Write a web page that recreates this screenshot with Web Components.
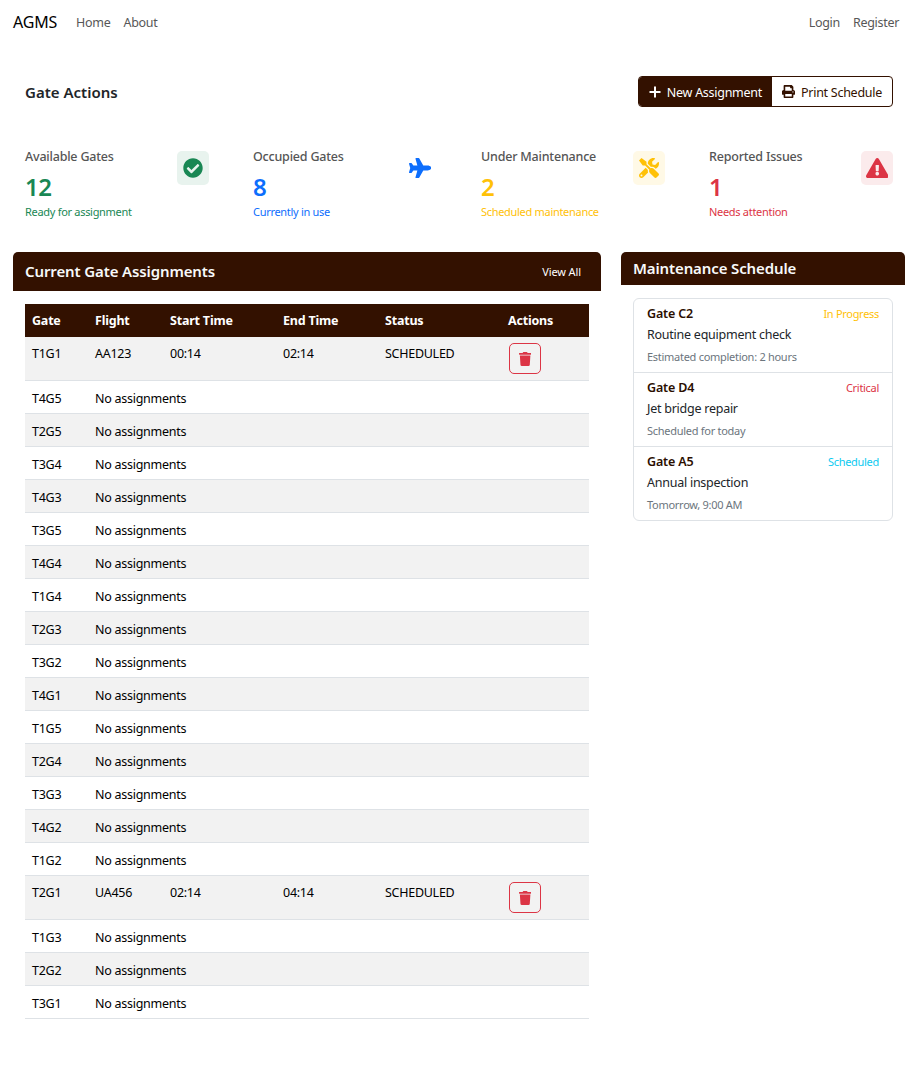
<!DOCTYPE html>
<html lang="en">
<head>
<meta charset="utf-8">
<title>AGMS</title>
<style>
  html, body { margin: 0; background: #fff; }
  body {
    font-family: "Noto Sans", "Open Sans", sans-serif;
    font-size: 13px;
    color: #212529;
    --dark: #331100;
  }
  .wrap { height: 1065px; overflow: hidden; width: 905px; }
</style>
</head>
<body>
<div class="wrap">
  <app-navbar></app-navbar>

  <page-header heading="Gate Actions"></page-header>

  <stat-row>
    <stat-card label="Available Gates" value="12" note="Ready for assignment" tone="#198754" tint="#e8f3ee" icon="check"></stat-card>
    <stat-card label="Occupied Gates" value="8" note="Currently in use" tone="#0d6efd" tint="#ffffff" icon="plane"></stat-card>
    <stat-card label="Under Maintenance" value="2" note="Scheduled maintenance" tone="#ffc107" tint="#fff9e6" icon="tools"></stat-card>
    <stat-card label="Reported Issues" value="1" note="Needs attention" tone="#dc3545" tint="#fbebec" icon="warning"></stat-card>
  </stat-row>

  <main-columns>
    <panel-card slot="left" heading="Current Gate Assignments" tall>
      <span slot="action">View All</span>
      <gate-table></gate-table>
    </panel-card>
    <panel-card slot="right" heading="Maintenance Schedule">
      <maintenance-list>
        <maintenance-item gate="Gate C2" status="In Progress" tone="#ffc107" task="Routine equipment check" when="Estimated completion: 2 hours"></maintenance-item>
        <maintenance-item gate="Gate D4" status="Critical" tone="#dc3545" task="Jet bridge repair" when="Scheduled for today"></maintenance-item>
        <maintenance-item gate="Gate A5" status="Scheduled" tone="#0dcaf0" task="Annual inspection" when="Tomorrow, 9:00 AM"></maintenance-item>
      </maintenance-list>
    </panel-card>
  </main-columns>
</div>

<script>
const ICONS = {
  check: ['0 0 512 512', 'M504 256c0 136.967-111.033 248-248 248S8 392.967 8 256 119.033 8 256 8s248 111.033 248 248zM227.314 387.314l184-184c6.248-6.248 6.248-16.379 0-22.627l-22.627-22.627c-6.248-6.249-16.379-6.249-22.628 0L216 308.118l-70.059-70.059c-6.248-6.248-16.379-6.248-22.628 0l-22.627 22.627c-6.248 6.248-6.248 16.379 0 22.627l104 104c6.249 6.249 16.379 6.249 22.628.001z'],
  plane: ['0 0 576 512', 'M480 192H365.71L260.61 8.06A16.014 16.014 0 0 0 246.71 0h-65.5c-10.63 0-18.3 10.17-15.38 20.39L214.86 192H112l-43.2-57.6c-3.02-4.03-7.77-6.4-12.8-6.4H16.01C5.6 128-2.04 137.78.49 147.88L32 256 .49 364.12C-2.04 374.22 5.6 384 16.01 384H56c5.04 0 9.78-2.37 12.8-6.4L112 320h102.86l-49.03 171.6c-2.92 10.22 4.75 20.4 15.38 20.4h65.5c5.74 0 11.04-3.08 13.89-8.06L365.71 320H480c35.35 0 96-28.65 96-64s-60.65-64-96-64z'],
  tools: ['0 0 512 512', 'M501.1 395.7L384 278.6c-23.1-23.1-57.6-27.6-85.4-13.9L192 158.1V96L64 0 0 64l96 128h62.1l106.6 106.6c-13.6 27.8-9.2 62.3 13.9 85.4l117.1 117.1c14.6 14.6 38.2 14.6 52.7 0l52.7-52.7c14.5-14.6 14.5-38.2 0-52.7zM331.7 225c28.3 0 54.9 11 74.9 31l19.4 19.4c15.8-6.9 30.8-16.5 43.8-29.5 37.1-37.1 49.7-89.3 37.9-136.7-2.2-9-13.5-12.1-20.1-5.5l-74.4 74.4-67.9-11.3L334 98.9l74.4-74.4c6.6-6.6 3.4-17.9-5.7-20.2-47.4-11.7-99.6.9-136.6 37.9-28.5 28.5-41.9 66.1-41.2 103.6l82.1 82.1c8.1-1.9 16.5-2.9 24.7-2.9zm-103.9 82l-56.7-56.7L18.7 402.8c-25 25-25 65.5 0 90.5s65.5 25 90.5 0l123.6-123.6c-7.6-19.9-9.9-41.6-5-62.7zM64 472c-13.2 0-24-10.8-24-24 0-13.3 10.7-24 24-24s24 10.7 24 24c0 13.2-10.7 24-24 24z'],
  warning: ['0 0 576 512', 'M569.517 440.013C587.975 472.007 564.806 512 527.94 512H48.054c-36.937 0-59.999-40.055-41.577-71.987L246.423 23.985c18.467-32.009 64.72-31.951 83.154 0l239.94 416.028zM288 354c-25.405 0-46 20.595-46 46s20.595 46 46 46 46-20.595 46-46-20.595-46-46-46zm-43.673-165.346l7.418 136c.347 6.364 5.609 11.346 11.982 11.346h48.546c6.373 0 11.635-4.982 11.982-11.346l7.418-136c.375-6.874-5.098-12.654-11.982-12.654h-63.383c-6.884 0-12.356 5.78-11.981 12.654z'],
  print: ['0 0 512 512', 'M448 192V77.25c0-8.49-3.37-16.62-9.37-22.63L393.37 9.37c-6-6-14.14-9.37-22.63-9.37H96C78.33 0 64 14.33 64 32v160c-35.35 0-64 28.65-64 64v112c0 8.84 7.16 16 16 16h48v96c0 17.67 14.33 32 32 32h320c17.67 0 32-14.33 32-32v-96h48c8.84 0 16-7.16 16-16V256c0-35.35-28.65-64-64-64zm-64 256H128v-96h256v96zm0-224H128V64h192v48c0 8.84 7.16 16 16 16h48v96zm48 72c-13.25 0-24-10.75-24-24 0-13.26 10.75-24 24-24s24 10.74 24 24c0 13.25-10.75 24-24 24z'],
  trash: ['0 0 448 512', 'M432 32H312l-9.4-18.7A24 24 0 0 0 281.1 0H166.8a23.72 23.72 0 0 0-21.4 13.3L136 32H16A16 16 0 0 0 0 48v32a16 16 0 0 0 16 16h416a16 16 0 0 0 16-16V48a16 16 0 0 0-16-16zM53.2 467a48 48 0 0 0 47.9 45h245.8a48 48 0 0 0 47.9-45L416 128H32z']
};

function icon(name, height) {
  const [box, d] = ICONS[name];
  const w = box.split(' ')[2] / 512 * height;
  return `<svg xmlns="http://www.w3.org/2000/svg" viewBox="${box}" width="${w}" height="${height}" fill="currentColor" style="display:block"><path d="${d}"/></svg>`;
}

class AppNavbar extends HTMLElement {
  connectedCallback() {
    this.attachShadow({ mode: 'open' });
    this.shadowRoot.innerHTML = `
      <style>
        :host { display: flex; align-items: center; height: 44px; margin-bottom: 1px; padding: 0 6px 0 13px; }
        .brand { font-size: 16px; letter-spacing: -0.2px; color: #000; margin-right: 19px; }
        a { color: #575757; font-size: 12.5px; letter-spacing: -0.3px; margin-right: 13px; }
        .push { flex: 1; }
        a:last-child { margin-right: 0; }
      </style>
      <span class="brand">AGMS</span>
      <a>Home</a><a>About</a>
      <span class="push"></span>
      <a>Login</a><a>Register</a>
    `;
  }
}

class PageHeader extends HTMLElement {
  connectedCallback() {
    this.attachShadow({ mode: 'open' });
    this.shadowRoot.innerHTML = `
      <style>
        :host { display: flex; align-items: center; justify-content: space-between; padding: 31px 12px 0 25px; height: 31px; }
        h1 { margin: 0; font-size: 15px; font-weight: 600; color: #212529; }
        .group { display: flex; height: 31px; box-sizing: border-box; border: 1px solid var(--dark); border-radius: 4px; overflow: hidden; font-size: 12.5px; letter-spacing: -0.27px; }
        .btn { display: flex; align-items: center; gap: 6px; padding: 1px 10px 0; }
        .btn svg { margin-top: -1px; }
        .primary { background: var(--dark); color: #fff; }
        .plain { color: var(--dark); }
      </style>
      <h1>${this.getAttribute('heading')}</h1>
      <div class="group">
        <div class="btn primary">
          <svg width="12" height="12" viewBox="0 0 12 12" fill="none" stroke="currentColor" stroke-width="2"><path d="M6 .5v11M.5 6h11"/></svg>
          New Assignment
        </div>
        <div class="btn plain">${icon('print', 13)}Print Schedule</div>
      </div>
    `;
  }
}

class StatRow extends HTMLElement {
  connectedCallback() {
    this.attachShadow({ mode: 'open' });
    this.shadowRoot.innerHTML = `
      <style>
        :host { display: grid; grid-template-columns: repeat(4, 184px); justify-content: space-between; padding: 41px 12px 0 25px; width: 868px; }
      </style>
      <slot></slot>
    `;
  }
}

class StatCard extends HTMLElement {
  connectedCallback() {
    const tone = this.getAttribute('tone');
    const name = this.getAttribute('icon');
    this.attachShadow({ mode: 'open' });
    this.shadowRoot.innerHTML = `
      <style>
        :host { display: flex; justify-content: space-between; align-items: flex-start; height: 71px; }
        .label { font-size: 12.5px; font-weight: 500; letter-spacing: -0.2px; color: #555; line-height: 17px; }
        .value { font-size: 24px; font-weight: 600; letter-spacing: -0.5px; color: ${tone}; line-height: 32px; margin-top: 6px; }
        .note { font-size: 11px; letter-spacing: -0.3px; color: ${tone}; line-height: 15px; margin-top: 1px; }
        .badge { width: 32px; height: 34px; box-sizing: border-box; border-radius: 5px; background: ${this.getAttribute('tint')}; color: ${tone}; display: flex; align-items: center; justify-content: center; margin-top: 3px; padding-right: ${name === 'plane' ? 2 : 0}px; }
      </style>
      <div>
        <div class="label">${this.getAttribute('label')}</div>
        <div class="value">${this.getAttribute('value')}</div>
        <div class="note">${this.getAttribute('note')}</div>
      </div>
      <div class="badge">${icon(name, 20)}</div>
    `;
  }
}

class MainColumns extends HTMLElement {
  connectedCallback() {
    this.attachShadow({ mode: 'open' });
    this.shadowRoot.innerHTML = `
      <style>
        :host { display: flex; gap: 20px; padding: 33px 0 0 13px; align-items: flex-start; }
        ::slotted([slot=left]) { width: 588px; }
        ::slotted([slot=right]) { width: 284px; }
      </style>
      <slot name="left"></slot>
      <slot name="right"></slot>
    `;
  }
}

class PanelCard extends HTMLElement {
  connectedCallback() {
    const tall = this.hasAttribute('tall');
    this.attachShadow({ mode: 'open' });
    this.shadowRoot.innerHTML = `
      <style>
        :host { display: block; }
        header { display: flex; align-items: center; justify-content: space-between; height: ${tall ? 38 : 32}px; padding: 0 20px 1px 12px; background: var(--dark); color: #f8f9fa; border-radius: 5px 5px 0 0; }
        h2 { margin: 0; font-size: 15px; font-weight: 600; letter-spacing: -0.12px; }
        ::slotted([slot=action]) { font-size: 11px; letter-spacing: -0.1px; color: #fff; }
        .body { padding: 13px 12px 0; }
      </style>
      <header><h2>${this.getAttribute('heading')}</h2><slot name="action"></slot></header>
      <div class="body"><slot></slot></div>
    `;
  }
}

class GateTable extends HTMLElement {
  connectedCallback() {
    const rows = [
      ['T1G1', 'AA123', '00:14', '02:14'], ['T4G5'], ['T2G5'], ['T3G4'], ['T4G3'], ['T3G5'], ['T4G4'],
      ['T1G4'], ['T2G3'], ['T3G2'], ['T4G1'], ['T1G5'], ['T2G4'], ['T3G3'], ['T4G2'], ['T1G2'],
      ['T2G1', 'UA456', '02:14', '04:14'], ['T1G3'], ['T2G2'], ['T3G1']
    ];
    const body = rows.map(r => r.length > 1
      ? `<tr class="full"><td>${r[0]}</td><td>${r[1]}</td><td>${r[2]}</td><td>${r[3]}</td><td>SCHEDULED</td><td><button>${icon('trash', 14)}</button></td></tr>`
      : `<tr><td>${r[0]}</td><td colspan="5">No assignments</td></tr>`).join('');
    this.attachShadow({ mode: 'open' });
    this.shadowRoot.innerHTML = `
      <style>
        :host { display: block; }
        table { width: 564px; border-collapse: separate; border-spacing: 0; table-layout: fixed; font-size: 12.5px; color: #000; }
        th { background: var(--dark); color: #fff; font-weight: 700; letter-spacing: -0.2px; text-align: left; height: 33px; padding: 0 7px; box-sizing: border-box; }
        td { height: 33px; padding: 3px 7px 0; box-sizing: border-box; border-bottom: 1px solid #dee2e6; letter-spacing: -0.27px; }
        tr:nth-child(odd) td { background: #f2f2f2; }
        tr.full td { height: 44px; vertical-align: top; padding-top: 8px; }
        tr.full td:last-child { padding-top: 6px; }
        button { width: 32px; height: 31px; display: flex; align-items: center; justify-content: center; padding: 0; margin-left: 1px; background: transparent; border: 1px solid #dc3545; border-radius: 5px; color: #dc3545; }
      </style>
      <table>
        <colgroup><col style="width:63px"><col style="width:75px"><col style="width:113px"><col style="width:102px"><col style="width:123px"><col></colgroup>
        <thead><tr><th>Gate</th><th>Flight</th><th>Start Time</th><th>End Time</th><th>Status</th><th>Actions</th></tr></thead>
        <tbody>${body}</tbody>
      </table>
    `;
  }
}

class MaintenanceList extends HTMLElement {
  connectedCallback() {
    this.attachShadow({ mode: 'open' });
    this.shadowRoot.innerHTML = `
      <style>
        :host { display: block; border: 1px solid #dee2e6; border-radius: 6px; overflow: hidden; }
        ::slotted(*:not(:last-child)) { border-bottom: 1px solid #dee2e6; }
      </style>
      <slot></slot>
    `;
  }
}

class MaintenanceItem extends HTMLElement {
  connectedCallback() {
    this.attachShadow({ mode: 'open' });
    this.shadowRoot.innerHTML = `
      <style>
        :host { display: block; padding: 6px 13px 0; height: 67px; }
        .top { display: flex; justify-content: space-between; align-items: center; line-height: 18px; }
        .gate { font-size: 12.5px; font-weight: 600; letter-spacing: -0.15px; color: #2b0e00; }
        .status { font-size: 11px; letter-spacing: -0.3px; color: ${this.getAttribute('tone')}; }
        .task { font-size: 12.5px; letter-spacing: -0.25px; color: #212529; line-height: 18px; margin-top: 3px; }
        .when { font-size: 11px; letter-spacing: -0.28px; color: #6c757d; line-height: 15px; margin-top: 5px; }
      </style>
      <div class="top"><span class="gate">${this.getAttribute('gate')}</span><span class="status">${this.getAttribute('status')}</span></div>
      <div class="task">${this.getAttribute('task')}</div>
      <div class="when">${this.getAttribute('when')}</div>
    `;
  }
}

customElements.define('app-navbar', AppNavbar);
customElements.define('page-header', PageHeader);
customElements.define('stat-row', StatRow);
customElements.define('stat-card', StatCard);
customElements.define('main-columns', MainColumns);
customElements.define('panel-card', PanelCard);
customElements.define('gate-table', GateTable);
customElements.define('maintenance-list', MaintenanceList);
customElements.define('maintenance-item', MaintenanceItem);
</script>
</body>
</html>
